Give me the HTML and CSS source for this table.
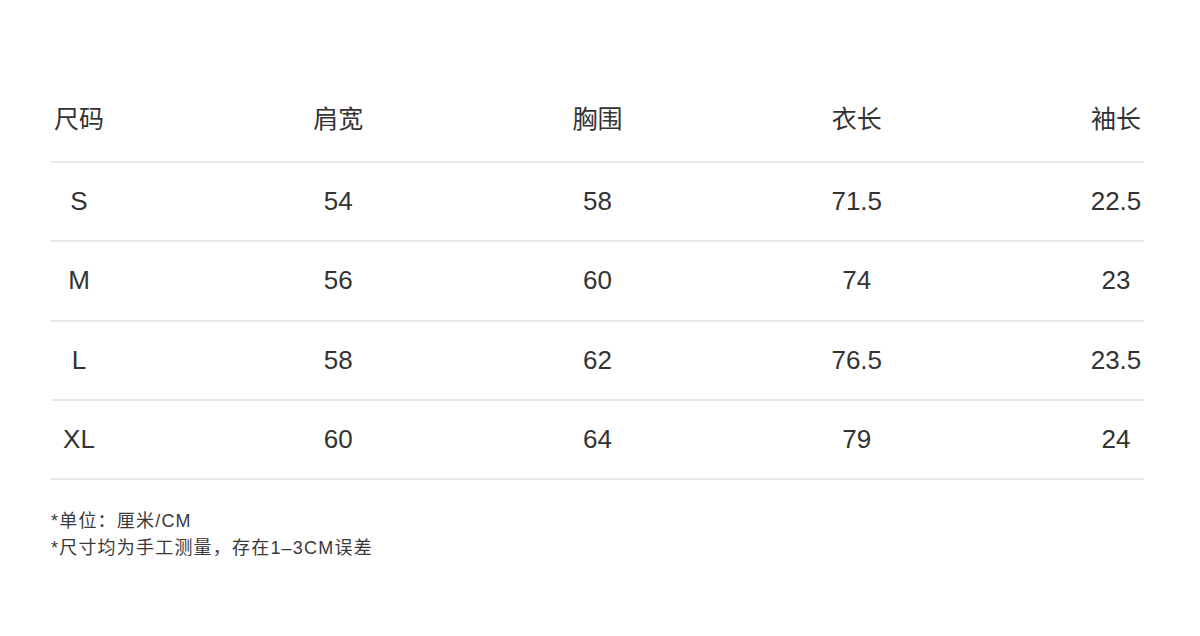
FILE: index.html
```
<!DOCTYPE html>
<html lang="zh">
<head>
<meta charset="utf-8">
<link rel="stylesheet" href="styles.css">
</head>
<body>
<div class="page">
  <div class="size-table">
    <div class="row head">
      <div class="cell">尺码</div>
      <div class="cell">肩宽</div>
      <div class="cell">胸围</div>
      <div class="cell">衣长</div>
      <div class="cell">袖长</div>
    </div>
    <div class="row">
      <div class="cell">S</div>
      <div class="cell">54</div>
      <div class="cell">58</div>
      <div class="cell">71.5</div>
      <div class="cell">22.5</div>
    </div>
    <div class="row">
      <div class="cell">M</div>
      <div class="cell">56</div>
      <div class="cell">60</div>
      <div class="cell">74</div>
      <div class="cell">23</div>
    </div>
    <div class="row">
      <div class="cell">L</div>
      <div class="cell">58</div>
      <div class="cell">62</div>
      <div class="cell">76.5</div>
      <div class="cell">23.5</div>
    </div>
    <div class="row">
      <div class="cell">XL</div>
      <div class="cell">60</div>
      <div class="cell">64</div>
      <div class="cell">79</div>
      <div class="cell">24</div>
    </div>
  </div>
  <div class="notes">
    <p>*单位：厘米/CM</p>
    <p>*尺寸均为手工测量，存在1–3CM误差</p>
  </div>
</div>
</body>
</html>
```
FILE: styles.css
```
html, body {
  margin: 0;
  padding: 0;
  background: #fff;
}
body {
  width: 1200px;
  height: 636px;
  overflow: hidden;
  font-family: "Liberation Sans", "Noto Sans CJK SC", sans-serif;
  color: #333;
}
.page {
  padding: 82px 56px 0 51px;
}
.size-table {
  display: flex;
  flex-direction: column;
}
.row {
  display: grid;
  grid-template-columns: repeat(5, 56px);
  justify-content: space-between;
  align-items: center;
  height: 79.3px;
  box-sizing: border-box;
  border-bottom: 2px solid #e8e8e8;
  font-size: 26px;
}
.row.head {
  height: 81px;
  font-size: 25px;
  padding-bottom: 10px;
}
.cell {
  text-align: center;
  white-space: nowrap;
}
.head .cell {
  font-family: "Noto Sans CJK SC", sans-serif;
}
.notes {
  margin-top: 28px;
  font-size: 18px;
  letter-spacing: 1.2px;
  line-height: 27px;
  color: #3a3a3a;
  font-family: "Liberation Sans", "Noto Sans CJK SC", sans-serif;
}
.notes p {
  margin: 0;
}
```
